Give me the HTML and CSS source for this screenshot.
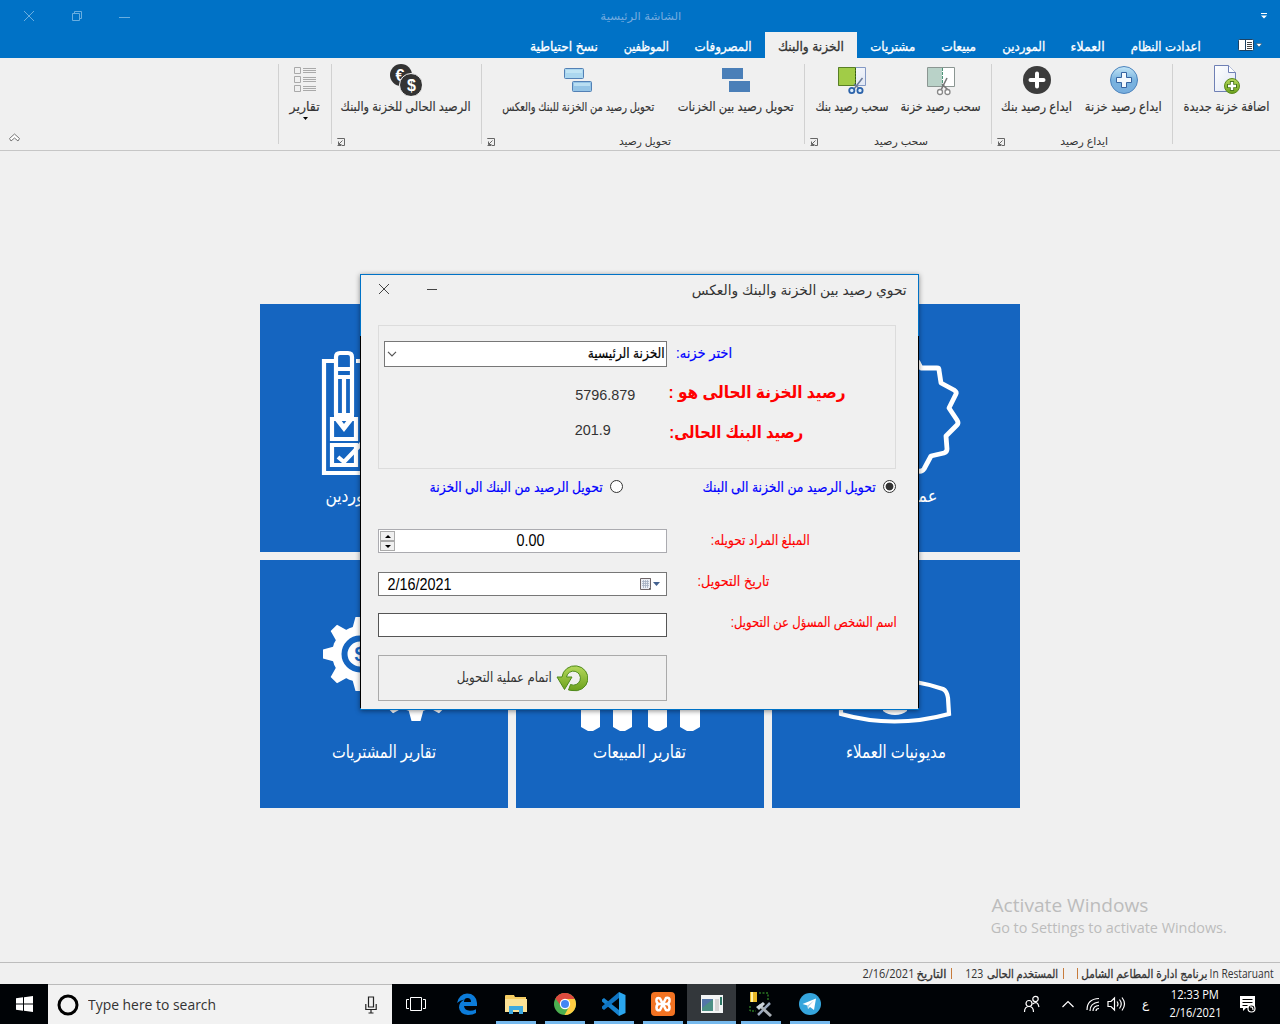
FILE: index.html
```html
<!DOCTYPE html>
<html lang="ar">
<head>
<meta charset="utf-8">
<title>الشاشة الرئيسية</title>
<link rel="stylesheet" href="styles.css">
</head>
<body>
<div class="app" dir="rtl">
  <header class="titlebar">
    <svg class="qat" width="8" height="8" viewBox="0 0 8 8"><path d="M1 1.500h6" stroke="#fff"/><path d="M1 3.500h6L4 6.500z" fill="#fff"/></svg>
    <span class="fit app-title" data-w="81">الشاشة الرئيسية</span>
    <div class="win-buttons">
      <svg width="12" height="12" viewBox="0 0 12 12"><path d="M0 7.500h11"/></svg>
      <svg width="12" height="12" viewBox="0 0 12 12"><path d="M1.500 3.500h7v7h-7zM3.500 3.500v-2h7v7h-2"/></svg>
      <svg width="12" height="12" viewBox="0 0 12 12"><path d="M1 1l10 10M11 1L1 11"/></svg>
    </div>
  </header>
  <nav class="tabs">
    <svg class="menu-icon" width="24" height="14" viewBox="0 0 24 14"><rect x=".5" y="1.500" width="15" height="11" rx="1" fill="#fff" stroke="#1c4263"/><path d="M7.500 2v10" stroke="#1c4263"/><path d="M9 4.500h5M9 6.500h5M9 8.500h5M9 10.500h5" stroke="#444"/><path d="M18 5.500h6L21 9z" fill="#fff" stroke="#1c4263" stroke-width=".5"/></svg>
    <a class="tab"><span class="fit" data-w="70">اعدادت النظام</span></a>
    <a class="tab"><span class="fit" data-w="34">العملاء</span></a>
    <a class="tab"><span class="fit" data-w="43">الموردين</span></a>
    <a class="tab"><span class="fit" data-w="35">مبيعات</span></a>
    <a class="tab"><span class="fit" data-w="45">مشتريات</span></a>
    <a class="tab active"><span class="fit" data-w="66">الخزنة والبنك</span></a>
    <a class="tab"><span class="fit" data-w="57">المصروفات</span></a>
    <a class="tab"><span class="fit" data-w="45">الموظفين</span></a>
    <a class="tab"><span class="fit" data-w="68">نسخ احتياطية</span></a>
  </nav>
  <section class="ribbon">
    <div class="group g-new">
      <div class="items">
        <div class="item">
          <svg width="32" height="32" viewBox="0 0 32 32"><defs><linearGradient id="pg" x2="1" y2="1"><stop stop-color="#fff"/><stop offset="1" stop-color="#dfe6f3"/></linearGradient><linearGradient id="gr" x2="0" y2="1"><stop stop-color="#b5d95c"/><stop offset="1" stop-color="#6ba01c"/></linearGradient><linearGradient id="bl" x2="0" y2="1"><stop stop-color="#c3e6f7"/><stop offset=".5" stop-color="#79b3df"/><stop offset="1" stop-color="#78aede"/></linearGradient></defs><path d="M4.500 1.500h14l7 7v19h-21z" fill="url(#pg)" stroke="#6f80b5"/><path d="M18.500 1.500v7h7" fill="#fff" stroke="#6f80b5"/><circle cx="22" cy="22" r="7.500" fill="url(#gr)" stroke="#5b8b1d"/><path d="M22 17v10M17 22h10" stroke="#47751a" stroke-width="4.200"/><path d="M22 18v8M18 22h8" stroke="#fff" stroke-width="2.400"/></svg>
          <span class="fit" data-w="86">اضافة خزنة جديدة</span>
        </div>
      </div>
    </div>
    <div class="group g-deposit">
      <div class="items">
        <div class="item">
          <svg width="32" height="32" viewBox="0 0 32 32"><circle cx="16" cy="16" r="13.500" fill="url(#bl)" stroke="#4d84bd"/><path d="M13.500 8.500h5v5h5v5h-5v5h-5v-5h-5v-5h5z" fill="#f4f9fd" stroke="#3563a0" stroke-linejoin="round"/></svg>
          <span class="fit" data-w="77">ايداع رصيد خزنة</span>
        </div>
        <div class="item">
          <svg width="32" height="32" viewBox="0 0 32 32"><circle cx="16" cy="16" r="14" fill="#3c3c3c"/><path d="M16 9.500v13M9.500 16h13" stroke="#fff" stroke-width="4" stroke-linecap="round"/></svg>
          <span class="fit" data-w="71">ايداع رصيد بنك</span>
        </div>
      </div>
      <div class="caption"><svg class="launcher" width="8" height="8" viewBox="0 0 8 8"><path d="M.5 1V.5h7v7H5M5.500 2.500L1.500 6.500M1.500 3.500v3h3M.5 7.500h4"/></svg><span class="fit" data-w="48">ايداع رصيد</span></div>
    </div>
    <div class="group g-withdraw">
      <div class="items">
        <div class="item">
          <svg width="32" height="32" viewBox="0 0 32 32"><path d="M2.500 3.500h27v19h-27z" fill="#fff" stroke="#8b9692"/><path d="M3 4h14v18H3z" fill="#b9d2c8"/><path d="M17.500 4v19" stroke="#4d9478" stroke-dasharray="3 1"/><path d="M22 14L16 26M17 20l6 6" stroke="#777" stroke-width="1.600"/><circle cx="15" cy="28" r="2.500" fill="#fff" stroke="#888" stroke-width="1.300"/><circle cx="22.500" cy="28" r="2.500" fill="#fff" stroke="#888" stroke-width="1.300"/></svg>
          <span class="fit" data-w="80">سحب رصيد خزنة</span>
        </div>
        <div class="item">
          <svg width="32" height="32" viewBox="0 0 32 32"><path d="M2.500 3.500h27v18h-27z" fill="url(#pg)" stroke="#8499c4"/><path d="M2.500 3.500h17v18h-17z" fill="#a1cc47" stroke="#587f25"/><path d="M19.500 4v18" stroke="#355c13" stroke-dasharray="2 1"/><path d="M26.500 14L18 25M18 20l6 5" stroke="#6b7a99" stroke-width="1.500"/><circle cx="15.800" cy="26.500" r="2.600" fill="#dcecfb" stroke="#2c63aa" stroke-width="1.800"/><circle cx="24" cy="26.500" r="2.600" fill="#dcecfb" stroke="#2c63aa" stroke-width="1.800"/></svg>
          <span class="fit" data-w="73">سحب رصيد بنك</span>
        </div>
      </div>
      <div class="caption"><svg class="launcher" width="8" height="8" viewBox="0 0 8 8"><path d="M.5 1V.5h7v7H5M5.500 2.500L1.500 6.500M1.500 3.500v3h3M.5 7.500h4"/></svg><span class="fit" data-w="54">سحب رصيد</span></div>
    </div>
    <div class="group g-transfer">
      <div class="items">
        <div class="item">
          <svg width="32" height="32" viewBox="0 0 32 32"><path d="M2 4h21v11H2zM9 17h21v11H9z" fill="#4a7fb8"/></svg>
          <span class="fit" data-w="116">تحويل رصيد بين الخزنات</span>
        </div>
        <div class="item wide">
          <svg width="32" height="32" viewBox="0 0 32 32"><g stroke="#5280b5"><rect x="2.500" y="4.500" width="19" height="10" rx="1" fill="#abd7ef"/><rect x="10.500" y="17.500" width="19" height="10" rx="1" fill="#94c4e6"/></g><path d="M4 6h16v3H4zM12 19h16v3H12z" fill="#c9e9f7" opacity=".7"/></svg>
          <span class="fit small" data-w="152">تحويل رصيد من الخزنة للبنك والعكس</span>
        </div>
      </div>
      <div class="caption"><svg class="launcher" width="8" height="8" viewBox="0 0 8 8"><path d="M.5 1V.5h7v7H5M5.500 2.500L1.500 6.500M1.500 3.500v3h3M.5 7.500h4"/></svg><span class="fit" data-w="52">تحويل رصيد</span></div>
    </div>
    <div class="group g-balance">
      <div class="items">
        <div class="item">
          <svg width="32" height="32" viewBox="0 0 32 32"><circle cx="11" cy="11" r="11" fill="#333"/><text x="10" y="17" class="coin">€</text><circle cx="21" cy="21" r="11.500" fill="#333" stroke="#f0f0f0"/><text x="21.500" y="26.500" class="coin">$</text></svg>
          <span class="fit" data-w="130">الرصيد الحالى للخزنة والبنك</span>
        </div>
      </div>
      <div class="caption"><svg class="launcher" width="8" height="8" viewBox="0 0 8 8"><path d="M.5 1V.5h7v7H5M5.500 2.500L1.500 6.500M1.500 3.500v3h3M.5 7.500h4"/></svg></div>
    </div>
    <div class="group g-reports">
      <div class="items">
        <div class="item">
          <svg width="32" height="32" viewBox="0 0 32 32"><g fill="none" stroke="#a9a9a9"><path d="M5.500 3.500h6v6h-6zM5.500 12.500h6v6h-6zM5.500 21.500h6v6h-6z"/><path d="M14 4.500h13M14 6.500h13M14 8.500h13M14 13.500h13M14 15.500h13M14 17.500h13M14 22.500h13M14 24.500h13M14 26.500h13"/></g></svg>
          <span class="fit" data-w="30">تقارير</span>
          <svg class="drop" width="5" height="3" viewBox="0 0 5 3"><path d="M0 0h5L2.500 3z"/></svg>
        </div>
      </div>
    </div>
    <svg class="collapse" width="13" height="10" viewBox="0 0 13 10"><path d="M1.500 5.500l5-4.500 5 4.500-1.500 2.500-3.500-3-3.500 3z" fill="#fff" stroke="#777"/></svg>
  </section>

  <main class="workspace">
    <div class="tiles">
      <div class="tile">
        <svg width="248" height="178" viewBox="0 0 248 178" class="line star"><path d="M124 76l12-10 10-8 3 6 16 0q2 0 2 2l2 13 13 7q3 2 2 4l-7 14 8 12q2 3 0 5l-11 11 1 13q0 3-3 4l-13 3-7 13q-2 3-6 2l-24-8-24 8-8-18-16-4 2-17-12-12 9-15-6-15 14-10z"/></svg>
        <span class="fit" data-w="82">عمليات البيع</span>
      </div>
      <div class="tile"></div>
      <div class="tile">
        <svg width="248" height="178" viewBox="0 0 248 178" class="line"><path d="M74 57H64v112h120V57H96M76 111V53q0-4 4-4h8q4 0 4 4v58M76 65h16M76 73h16M84 75v36M74 111h20M72 115h24v20H72zM72 141h24v20H72z"/><path d="M77 115l7 9 7-9" stroke-width="5"/><path d="M78 153l6 5 18-19"/></svg>
        <span class="fit" data-w="118">مديونيات الموردين</span>
      </div>
      <div class="tile">
        <svg width="248" height="178" viewBox="0 0 248 178" class="line"><path d="M69 154v-20q2-5 6-6 47-16 96 1 4 2 5 9l1 16q-55 15-108 0z"/><path d="M111 140h24v11q-5 4-12 4t-12-4z" fill="#fff" stroke="none"/></svg>
        <span class="fit" data-w="100">مديونيات العملاء</span>
      </div>
      <div class="tile">
        <svg width="248" height="178" viewBox="0 0 248 178"><path d="M65 100h19v67l-7 4h-5l-7-4zM97 80h19v87l-7 4h-5l-7-4zM132 80h19v87l-7 4h-5l-7-4zM164 100h20v67l-7 4h-6l-7-4z" fill="#fff"/></svg>
        <span class="fit" data-w="93">تقارير المبيعات</span>
      </div>
      <div class="tile">
        <svg width="248" height="178" viewBox="0 0 248 178">
          <defs><g id="gear" fill="#fff"><circle r="28"/><g id="teeth"><path d="M-37-4.500l11-3v15l-11-3zM37-4.500l-11-3v15l11-3zM-4.500-37l-3 11h15l-3-11zM-4.500 37l-3-11h15l-3 11z"/></g><use href="#teeth" transform="rotate(45)"/></g></defs>
          <use href="#gear" x="100" y="94"/><circle cx="100" cy="94" r="15.500" fill="none" stroke="#1565c0" stroke-width="6"/><text x="100" y="101" class="gear-sign">$</text>
          <use href="#gear" x="156" y="124"/>
        </svg>
        <span class="fit" data-w="104">تقارير المشتريات</span>
      </div>
    </div>

    <section class="dialog">
      <header class="dialog-bar">
        <span class="fit" data-w="215">تحوي رصيد بين الخزنة والبنك والعكس</span>
        <div class="dialog-buttons">
          <svg width="12" height="12" viewBox="0 0 12 12"><path d="M1 6.500h10"/></svg>
          <svg width="12" height="12" viewBox="0 0 12 12"><path d="M1 1l10 10M11 1L1 11"/></svg>
        </div>
      </header>
      <div class="panel">
        <div class="row pick"><span class="fit blue" data-w="56">اختر خزنه:</span>
          <div class="select"><span class="fit" data-w="77">الخزنة الرئيسية</span><svg width="10" height="6" viewBox="0 0 10 6"><path d="M1 .8l4 4 4-4" fill="none" stroke="#555" stroke-width="1.200"/></svg></div></div>
        <div class="row cash"><span class="fit big" data-w="177">رصيد الخزنة الحالى هو :</span><span class="fit value" data-w="60">5796.879</span></div>
        <div class="row bank"><span class="fit big" data-w="134">رصيد البنك الحالى:</span><span class="fit value" data-w="36">201.9</span></div>
      </div>
      <div class="radios">
        <label class="radio on"><i></i><span class="fit" data-w="173">تحويل الرصيد من الخزنة الى البنك</span></label>
        <label class="radio"><i></i><span class="fit" data-w="173">تحويل الرصيد من البنك الى الخزنة</span></label>
      </div>
      <div class="form">
        <div class="label l-amount"><span class="fit" data-w="99">المبلغ المراد تحويله:</span></div>
        <div class="field amount"><span class="fit num" data-w="28">0.00</span>
          <div class="spin"><b><svg width="6" height="3" viewBox="0 0 6 3"><path d="M0 3h6L3 0z"/></svg></b><b><svg width="6" height="3" viewBox="0 0 6 3"><path d="M0 0h6L3 3z"/></svg></b></div></div>
        <div class="label l-date"><span class="fit" data-w="72">تاريخ التحويل:</span></div>
        <div class="field date">
          <svg width="22" height="14" viewBox="0 0 22 14"><path d="M2.500 1.500h9v11h-8l-1-1z" fill="#f6f6f8" stroke="#666"/><path d="M1.500 1.500h10v9l-2 2h-8z" fill="#eceef4" stroke="#6f6668"/><path d="M3 4.500h7M3 6.500h7M3 8.500h7M4.500 3v8M6.500 3v8M8.500 3v8" stroke="#a5afc0" stroke-width=".8"/><path d="M14 5h7l-3.500 4z" fill="#43618f"/></svg>
          <span class="fit num" data-w="64">2/16/2021</span></div>
        <div class="label l-name"><span class="fit" data-w="166">اسم الشخص المسؤل عن التحويل:</span></div>
        <div class="field name"></div>
        <div class="submit">
          <svg width="32" height="32" viewBox="0 0 32 32"><path d="M1 15l5 0A13 12.500 0 1 1 16 28.500l-3.500-.5 2-5.500A7 7 0 1 0 10.500 15H16L8.500 27.500z" fill="url(#gr)" stroke="#4f8a1b"/></svg>
          <span class="fit" data-w="95">اتمام عملية التحويل</span>
        </div>
      </div>
    </section>

    <div class="watermark" dir="ltr"><span class="fit wm-big" data-w="157">Activate Windows</span><span class="fit wm-small" data-w="236">Go to Settings to activate Windows.</span></div>
  </main>

  <footer class="status">
    <span class="fit lat" data-w="64">In Restaruant</span><span class="fit s-app" data-w="126">برنامج ادارة المطاعم الشامل</span><i></i><i class="s-bar"></i><span class="fit s-user" data-w="71">المستخدم الحالى</span><span class="fit lat s-num" data-w="18">123</span><i class="s-bar2"></i><span class="fit s-datelabel" data-w="30">التاريخ</span><span class="fit lat s-date" data-w="52">2/16/2021</span>
  </footer>
</div>

<footer class="taskbar">
  <div class="start"><svg width="17" height="16" viewBox="0 0 17 16"><path d="M0 2.300l7-1v6.200H0zM8 1.200L17 0v7.500H8zM0 8.500h7v6.200l-7-1zM8 8.500h9V16l-9-1.200z" fill="#fff"/></svg></div>
  <div class="search"><svg width="22" height="22" viewBox="0 0 22 22"><circle cx="11" cy="11" r="9" fill="none" stroke="#000" stroke-width="3"/></svg><span class="fit" data-w="128">Type here to search</span>
    <svg class="mic" width="12" height="18" viewBox="0 0 12 18"><path d="M3.500 1h5v10h-5zM.8 8v5.500h10.400V8M6 13.500V17M3.500 17h5" fill="none" stroke="#222" stroke-width="1.200"/></svg></div>
  <div class="cell view"><svg width="20" height="16" viewBox="0 0 20 16"><path d="M4.500 1.500h11v13h-11zM3 3.500H.5v9H3M17 3.500h2.500v9H17" fill="none" stroke="#fff"/></svg></div>
  <div class="cell"><svg width="22" height="24" viewBox="0 0 22 24"><path d="M1 11Q3 2 11 1.500 20 1.500 21 11v3H8q.5 4.500 6 4.700 3 0 6-1.500V21q-3 2-8 2Q3.500 22 3 15.500 3 10 8.500 7.500 4 8 1 11zM8 10h7q0-4-3.500-4T8 10z" fill="#0c7cd9"/></svg></div>
  <div class="cell run"><svg width="24" height="24" viewBox="0 0 24 24"><path d="M1 4q0-1 1-1h8l1 2h11v14H1z" fill="#f5cd62"/><path d="M1 7h22v13H1z" fill="#fbe296"/><path d="M5 22v-8h14v8h-4v-4H9v4z" fill="#3da9e0"/></svg></div>
  <div class="cell run"><svg width="24" height="24" viewBox="0 0 24 24"><circle cx="12" cy="12" r="11" fill="#4caf50"/><path d="M12 12L2.500 6.500A11 11 0 0 1 21.500 6.500z" fill="#dd4b3e"/><path d="M2.500 6.500L8 14l4-7h9.500A11 11 0 0 0 2.500 6.500z" fill="#dd4b3e"/><path d="M12 7h9.800A11 11 0 0 1 11.500 23L16.500 14z" fill="#ffcd41"/><circle cx="12" cy="12" r="5.200" fill="#fff"/><circle cx="12" cy="12" r="4" fill="#4285f4"/></svg></div>
  <div class="cell run"><svg width="26" height="26" viewBox="0 0 26 26"><path d="M18 7v12L10 13z" fill="#000306"/><path d="M1 8.500L3 7l15 12v6L1 10.500z" fill="#1783cf"/><path d="M1 17.500L3 19 18 7V1L1 15.500z" fill="#0f74c2"/><path d="M18 1l6.500 3v18L18 25z" fill="#2aa6ee"/></svg></div>
  <div class="cell run"><svg width="24" height="24" viewBox="0 0 24 24"><rect width="24" height="24" rx="4" fill="#f27322"/><path d="M9 6.500Q5 5 5.500 9q.5 3 3 3-3 0-3 3.500 0 3.500 3.500 2.500l6-12q4-1 3.500 3-.5 3-3 3 3 0 3 3.500T15 18M9 6.500L15 18M9 12h6" fill="none" stroke="#fff" stroke-width="2.600" stroke-linecap="round"/></svg></div>
  <div class="cell run current"><svg width="24" height="20" viewBox="0 0 24 20"><path d="M1 1h22v18H1z" fill="#f2f4f5"/><path d="M2 5h11v12H2z" fill="#4c8f84"/><path d="M2 5h11L2 14z" fill="#5476a8"/><path d="M15 5h4v12h-4z" fill="#d4d4d4"/><path d="M20 3h2v8h-2z" fill="#2f7766"/></svg></div>
  <div class="cell run"><svg width="26" height="26" viewBox="0 0 26 26"><path d="M2 1h7v10H2z" fill="#e9b928"/><path d="M3 1h2v10H3z" fill="#fff2a5"/><path d="M11 2h9v8M2 15v5h6" fill="none" stroke="#3fae2f" stroke-dasharray="2 1.500"/><path d="M10 24L22 12" stroke="#9aa8bd" stroke-width="2.500"/><path d="M11 14l12 11" stroke="#aab1b7" stroke-width="3"/><path d="M8 16l7-5 2 2-6 6z" fill="#ccd4db"/></svg></div>
  <div class="cell run"><svg width="22" height="22" viewBox="0 0 22 22"><circle cx="11" cy="11" r="11" fill="#35a5dc"/><path d="M3.500 11L17 5.500 15 17l-4-3-2 2-.5-3.500z" fill="#fff"/><path d="M8.500 12.500L15 7.500 10 13l-1 3z" fill="#a9cde2"/></svg></div>
  <div class="tray">
    <svg class="people" width="18" height="18" viewBox="0 0 18 18"><circle cx="6" cy="8.500" r="3"/><path d="M1.500 17q0-5.500 4.500-5.500t4.500 5.500"/><circle cx="12.500" cy="4" r="2.700"/><path d="M9.500 9q5-4 6.500 3"/></svg>
    <svg class="chev" width="14" height="8" viewBox="0 0 14 8"><path d="M1.500 7L7 1.500 12.500 7"/></svg>
    <svg class="wifi" width="14" height="16" viewBox="0 0 14 16"><path d="M1 14Q1 3 13 2.500M4 15Q4 7 13 6M7 15Q7 10 13 9.500M10 15q0-2.500 3-2.500"/></svg>
    <svg class="sound" width="19" height="16" viewBox="0 0 19 16"><path d="M1 5.500h3L7.500 2v12L4 10.500H1zM10 5.500q2 2.500 0 5M12.500 3.500q3.500 4.500 0 9M15 1.500q5 6.500 0 13"/></svg>
    <span class="lang">ع</span>
    <div class="clock"><span class="fit" data-w="48">12:33 PM</span><span class="fit" data-w="52">2/16/2021</span></div>
    <svg class="note" width="17" height="18" viewBox="0 0 17 18"><path d="M1 1h15v12H7l-3 3v-3H1z" fill="#fff" stroke="none"/><path d="M3.500 4.500h10M3.500 7.500h10M3.500 10.500h5" stroke="#000"/><circle cx="12.500" cy="13.500" r="3.500" fill="#000"/><path d="M11 12q3-1 3 3"/></svg>
  </div>
</footer>
<script src="fit.js"></script>
</body>
</html>
```
FILE: styles.css
```css
* { box-sizing: border-box; }
body {
  margin: 0;
  width: 1280px;
  height: 1024px;
  overflow: hidden;
  display: flex;
  flex-direction: column;
  font: 13px/18px "Liberation Sans", "DejaVu Sans", sans-serif;
  color: #333;
  background: #f0f0f0;
}
svg { display: block; flex: none; }
.app { height: 984px; display: flex; flex-direction: column; font-family: "Liberation Sans", "DejaVu Sans", sans-serif; }
.fit { display: inline-flex; justify-content: center; flex: none; white-space: nowrap; }
.fit > span { flex: none; }

.titlebar { height: 32px; background: #0072c6; display: flex; align-items: center; justify-content: space-between; padding: 0 12px 0 23px; }
.qat { margin-inline-end: 579px; }
.app-title { color: #74abdf; font-size: 11px; margin-inline-end: auto; }
.win-buttons { display: flex; gap: 36px; }
.win-buttons svg { fill: none; stroke: #69aee0; }

.tabs { height: 26px; background: #0072c6; display: flex; padding-right: 18px; color: #fff; }
.menu-icon { margin: 6px 0 0 24px; }
.tab { display: flex; align-items: center; padding: 3px 13px 0; font-size: 13px; -webkit-text-stroke: .3px; }
.tab.active { background: #f0f0f0; color: #333; }

.ribbon { height: 93px; border-bottom: 1px solid #c6c6c6; display: flex; padding-top: 6px; }
.group { height: 80px; border-left: 1px solid #d1d1d1; display: flex; flex-direction: column; justify-content: space-between; -webkit-text-stroke: .15px; }
.items { display: flex; gap: 13px; padding-right: 10px; }
.g-new { width: 108px; }
.g-new .items { padding-right: 11px; }
.g-deposit { width: 181px; }
.g-withdraw { width: 187px; }
.g-transfer { width: 323px; }
.g-balance { width: 150px; }
.g-reports { width: 53px; }
.item { display: flex; flex-direction: column; align-items: center; gap: 2px; }
.item.wide { width: 174px; }
.item .small { font-size: 12px; }
.caption { display: flex; flex-direction: row-reverse; align-items: center; height: 11px; padding-left: 5px; font-size: 11px; -webkit-text-stroke: 0; }
.caption .fit { margin: 4px auto 0; padding-right: 0; }
.g-deposit .caption, .g-withdraw .caption { padding-right: 8px; }
.g-transfer .caption { padding-right: 8px; }
.caption .launcher { margin-top: 6px; }
.g-balance .caption { justify-content: flex-end; flex-direction: row; }
.launcher { fill: none; stroke: #666; }
.drop { margin-top: -1px; }
.coin { font: bold 16px "Liberation Sans", sans-serif; fill: #fff; text-anchor: middle; }
.collapse { margin: 69px auto 0 8px; }

.workspace { flex: 1; position: relative; display: flex; justify-content: center; align-items: flex-start; }
.tiles { display: grid; grid-template-columns: repeat(3, 248px); grid-auto-rows: 248px; gap: 8px; margin-top: 153px; }
.tile { background: #1565c0; color: #fff; display: flex; flex-direction: column; align-items: center; font-size: 18px; line-height: 28px; overflow: hidden; }
.line { fill: none; stroke: #fff; stroke-width: 4.200; }
.star { stroke-width: 4.800; stroke-linejoin: round; }
.gear-sign { font: bold 20px "Liberation Sans", sans-serif; fill: #1565c0; text-anchor: middle; }

.dialog {
  position: absolute; left: 360px; top: 123px; width: 559px; height: 436px;
  background: #f0f0f0; border: 1px solid;
  border-image: linear-gradient(#0072c6 62px, #000 62px, #000 434px, #0072c6 434px) 1;
  box-shadow: 0 1px 5px rgba(0, 0, 0, .45);
  padding: 0 17px;
}
.dialog-bar { height: 50px; padding-top: 6px; margin: 0 -6px 0 0; display: flex; justify-content: space-between; align-items: flex-start; font-size: 14px; }
.dialog-buttons { display: flex; gap: 36px; padding-top: 2px; }
.dialog-buttons svg { fill: none; stroke: #444; }
.panel { width: 518px; height: 144px; margin-right: 5px; border: 1px solid #dcdcdc; padding: 15px 0 0 5px; }
.row { display: flex; align-items: center; }
.pick { height: 26px; padding-right: 163px; gap: 9px; font-size: 14px; }
.pick .fit { margin-bottom: 2px; -webkit-text-stroke: .2px; }
.blue { color: #00f; }
.select { width: 283px; height: 26px; border: 1px solid #777; background: #fff; color: #000; display: flex; align-items: center; justify-content: space-between; padding: 0 1px 0 2px; }
.cash { height: 24px; margin-top: 14px; padding-right: 49px; gap: 34px; }
.bank { height: 24px; margin-top: 16px; padding-right: 92px; gap: 58px; }
.big { color: #f00; font-size: 17px; font-weight: bold; }
.value { font-size: 15px; }
.cash .value { margin-top: 4px; }
.bank .value { margin-top: -6px; }
.radios { display: flex; gap: 80px; padding-right: 5px; height: 35px; align-items: center; }
.radio { display: flex; align-items: center; gap: 7px; color: #00f; font-size: 14px; -webkit-text-stroke: .2px; }
.radio i { width: 13px; height: 13px; border: 1px solid #333; border-radius: 50%; background: #fff; }
.radio.on i { background: radial-gradient(circle, #333 0 3.500px, #fff 4.300px); }
.form { display: grid; grid-template-columns: 1fr 289px; padding-top: 25px; }
.label { color: #f00; font-size: 14px; display: flex; justify-content: flex-end; height: 22px; align-items: center; -webkit-text-stroke: .15px; }
.l-amount { padding-left: 44px; }
.l-date { padding-left: 30px; height: 18px; }
.l-name { padding-left: 64px; height: 18px; }
.field { height: 24px; background: #fff; border: 1px solid #777; color: #000; display: flex; align-items: center; }
.num { font-size: 16px; }
.amount { border-color: #ababb0; margin-bottom: 19px; justify-content: flex-end; padding-left: 1px; }
.spin { width: 15px; height: 20px; display: flex; flex-direction: column; }
.amount .num { margin-left: 122px; }
.spin b { flex: 1; border: 1px solid #aaa; background: #f0f0f0; display: flex; align-items: center; justify-content: center; }
.date { margin-bottom: 17px; justify-content: space-between; padding: 0 5px 0 9px; }
.date .num { padding-top: 2px; }
.name { border-color: #555; margin-bottom: 18px; }
.submit { grid-column: 2; height: 46px; border: 1px solid #aaa; display: flex; align-items: center; justify-content: center; gap: 4px; font-size: 14px; }
.submit .fit { margin-bottom: 2px; }

.watermark { position: absolute; left: 991px; top: 741px; display: flex; flex-direction: column; align-items: flex-start; color: #bcbcbc; font-family: "Open Sans", sans-serif; }
.wm-big { font-size: 19px; line-height: 26px; }
.wm-small { font-size: 14px; line-height: 20px; }

.status { height: 22px; border-top: 1px solid #bdbdbd; display: flex; align-items: center; padding-right: 6px; font-size: 12px; -webkit-text-stroke: .3px; }
.status .lat { font-family: "Open Sans", sans-serif; -webkit-text-stroke: 0; }
.status i { width: 1px; height: 11px; background: #c77b3b; margin-right: 3px; }
.s-app { margin-right: 3px; }
.status .s-bar { margin-right: 13px; }
.s-user { margin-right: 5px; }
.s-num { margin-right: 4px; }
.status .s-bar2 { margin-right: 13px; }
.s-datelabel { margin-right: 4px; }
.s-date { margin-right: 3px; }

.taskbar { height: 40px; background: #000306; display: flex; font-family: "Open Sans", sans-serif; }
.start { width: 48px; display: flex; align-items: center; justify-content: center; }
.search { width: 344px; background: #f2f2f2; border-top: 1px solid #bbb; display: flex; align-items: center; padding: 0 15px 0 9px; gap: 9px; font-size: 15px; color: #333; }
.search .fit { margin-top: -2px; }
.mic { margin-left: auto; }
.cell { width: 49px; display: flex; align-items: center; justify-content: center; }
.view { width: 50px; padding-right: 2px; }
.run { background: linear-gradient(#76b9ed, #76b9ed) center bottom / 40px 3px no-repeat; }
.current { background: linear-gradient(#76b9ed, #76b9ed) center bottom / 100% 3px no-repeat #33373b; }
.tray { margin-left: auto; display: flex; align-items: center; color: #fff; font-size: 12px; padding-right: 24px; }
.tray svg { fill: none; stroke: #fff; stroke-width: 1.200; }
.chev { margin-left: 20px; }
.wifi { margin-left: 11px; }
.sound { margin-left: 7px; }
.lang { font-family: "DejaVu Sans", sans-serif; width: 8px; margin: 0 18px 0 16px; }
.clock { width: 54px; display: flex; flex-direction: column; align-items: center; }
.clock .fit { line-height: 18px; }
.note { margin-left: 17px; }
```
FILE: fit.js
```js
// Sets each label to its column width by condensing or widening the run of text.
document.querySelectorAll('.fit').forEach(function (el) {
  var inner = document.createElement('span');
  inner.textContent = el.textContent;
  el.textContent = '';
  el.appendChild(inner);
  var natural = inner.getBoundingClientRect().width;
  var target = Number(el.dataset.w);
  el.style.width = target + 'px';
  inner.style.transform = 'scaleX(' + target / natural + ')';
});
```
